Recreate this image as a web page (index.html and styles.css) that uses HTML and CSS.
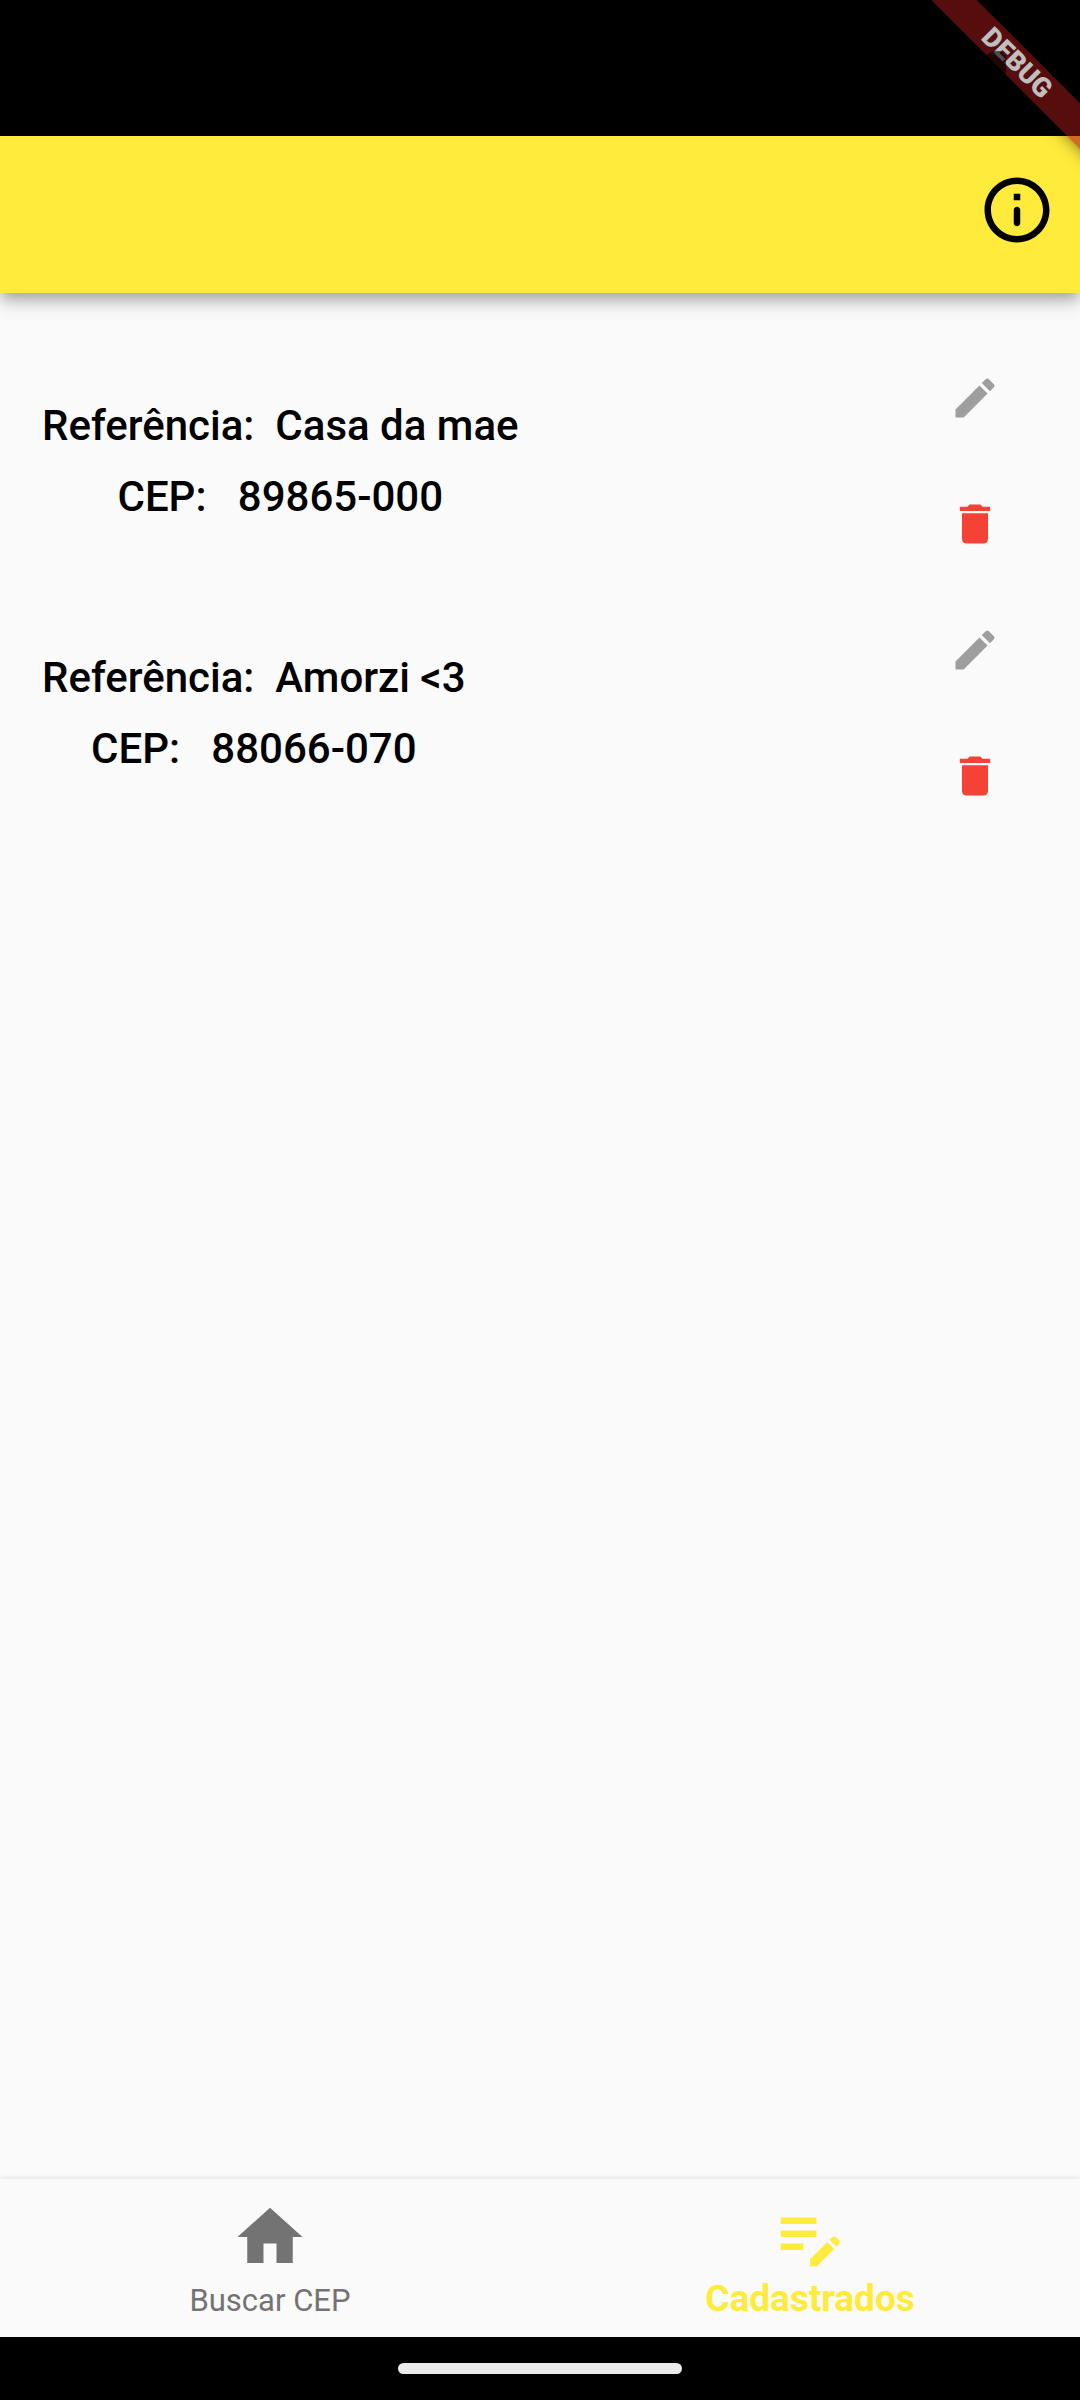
FILE: index.html
```html
<!DOCTYPE html>
<html lang="pt-BR">
<head>
<meta charset="utf-8">
<meta name="viewport" content="width=device-width, initial-scale=1">
<title>Cadastrados</title>
<link rel="stylesheet" href="styles.css">
</head>
<body>
<div class="app">
  <div class="status-bar"></div>
  <header class="app-bar">
    <button class="icon-button" type="button" aria-label="Informações">
      <svg class="icon icon-large" viewBox="0 0 24 24" aria-hidden="true"><path d="M11 7h2v2h-2V7zm1 10c.55 0 1-.45 1-1v-4c0-.55-.45-1-1-1s-1 .45-1 1v4c0 .55.45 1 1 1zm0-15C6.48 2 2 6.48 2 12s4.48 10 10 10 10-4.480 10-10S17.520 2 12 2zm0 18c-4.410 0-8-3.590-8-8s3.590-8 8-8 8 3.590 8 8-3.590 8-8 8z"/></svg>
    </button>
  </header>
  <main class="content">
    <ul class="address-list">
      <li class="address">
        <div class="address-text">
          <p class="line">Referência:  Casa da mae</p>
          <p class="line">CEP:   89865-000</p>
        </div>
        <div class="actions">
          <button class="icon-button edit" type="button" aria-label="Editar Casa da mae">
            <svg class="icon" viewBox="0 0 24 24" aria-hidden="true"><path d="M3 17.250V21h3.750L17.810 9.940l-3.750-3.750L3 17.250zM20.710 7.040c.39-.39.39-1.020 0-1.410l-2.340-2.340c-.39-.39-1.020-.39-1.410 0l-1.830 1.830 3.750 3.750 1.830-1.830z"/></svg>
          </button>
          <button class="icon-button delete" type="button" aria-label="Excluir Casa da mae">
            <svg class="icon" viewBox="0 0 24 24" aria-hidden="true"><path d="M6 19c0 1.100.9 2 2 2h8c1.100 0 2-.9 2-2V7H6v12zM19 4h-3.500l-1-1h-5l-1 1H5v2h14V4z"/></svg>
          </button>
        </div>
      </li>
      <li class="address">
        <div class="address-text">
          <p class="line">Referência:  Amorzi &lt;3</p>
          <p class="line">CEP:   88066-070</p>
        </div>
        <div class="actions">
          <button class="icon-button edit" type="button" aria-label="Editar Amorzi">
            <svg class="icon" viewBox="0 0 24 24" aria-hidden="true"><path d="M3 17.250V21h3.750L17.810 9.940l-3.750-3.750L3 17.250zM20.710 7.040c.39-.39.39-1.020 0-1.410l-2.340-2.340c-.39-.39-1.020-.39-1.410 0l-1.830 1.830 3.750 3.750 1.830-1.830z"/></svg>
          </button>
          <button class="icon-button delete" type="button" aria-label="Excluir Amorzi">
            <svg class="icon" viewBox="0 0 24 24" aria-hidden="true"><path d="M6 19c0 1.100.9 2 2 2h8c1.100 0 2-.9 2-2V7H6v12zM19 4h-3.500l-1-1h-5l-1 1H5v2h14V4z"/></svg>
          </button>
        </div>
      </li>
    </ul>
  </main>
  <nav class="bottom-nav">
    <a class="tab" href="#buscar">
      <svg class="icon icon-large" viewBox="0 0 24 24" aria-hidden="true"><path d="M10 20v-6h4v6h5v-8h3L12 3 2 12h3v8z"/></svg>
      <span class="tab-label">Buscar CEP</span>
    </a>
    <a class="tab tab-active" href="#cadastrados" aria-current="page">
      <svg class="icon icon-large" viewBox="0 0 24 24" aria-hidden="true"><path d="M3 10h11v2H3v-2zm0-2h11V6H3v2zm0 8h7v-2H3v2zm15.010-3.130.71-.71c.39-.39 1.020-.39 1.410 0l.71.71c.39.39.39 1.020 0 1.410l-.71.71-2.120-2.120zm-.71.71-5.300 5.300V21h2.120l5.300-5.300-2.120-2.120z"/></svg>
      <span class="tab-label">Cadastrados</span>
    </a>
  </nav>
  <footer class="gesture-bar"><div class="gesture-handle"></div></footer>
  <div class="ribbon-corner">
    <div class="ribbon">DEBUG</div>
    <svg class="battery" viewBox="0 0 20 25" aria-hidden="true"><path d="M7 0h8l5 6v19L0 4z"/></svg>
  </div>
  <div class="status-scrim"></div>
</div>
</body>
</html>
```

FILE: styles.css
```css
* {
  box-sizing: border-box;
}

body {
  margin: 0;
  background: #fafafa;
  color: #000;
  font-family: Roboto, "Liberation Sans", sans-serif;
}

.app {
  position: relative;
  display: flex;
  flex-direction: column;
  min-height: 100vh;
  overflow: hidden;
}

.status-bar {
  height: 136px;
  background: #000;
}

.app-bar {
  display: flex;
  align-items: center;
  justify-content: flex-end;
  height: 157px;
  padding-bottom: 10px;
  background: #ffeb3b;
  box-shadow:
    0 5px 11px -3px rgba(0, 0, 0, 0.2),
    0 11px 13px rgba(0, 0, 0, 0.14),
    0 3px 26px rgba(0, 0, 0, 0.12);
}

.icon-button {
  display: flex;
  align-items: center;
  justify-content: center;
  width: 126px;
  height: 126px;
  padding: 0;
  border: 0;
  background: none;
  color: inherit;
  cursor: pointer;
}

.icon {
  display: block;
  width: 52px;
  height: 52px;
  fill: currentColor;
}

.icon-large {
  width: 78px;
  height: 78px;
}

.content {
  flex: 1;
  padding: 42px;
}

.address-list {
  margin: 0;
  padding: 0;
  list-style: none;
}

.address {
  display: flex;
  align-items: center;
  justify-content: space-between;
}

.address-text {
  text-align: center;
}

.line {
  margin: 0;
  font-size: 42px;
  font-weight: 500;
  line-height: 71px;
  white-space: pre;
}

.edit {
  color: #9e9e9e;
}

.delete {
  color: #f44336;
}

.bottom-nav {
  display: flex;
  height: 158px;
  background: #fafafa;
  box-shadow: 0 -1px 4px rgba(0, 0, 0, 0.1);
}

.tab {
  display: flex;
  flex: 1;
  flex-direction: column;
  align-items: center;
  padding-top: 19px;
  color: #737373;
  font-size: 31px;
  line-height: 50px;
  text-decoration: none;
}

.tab-active {
  color: #ffeb3b;
  font-size: 37px;
  font-weight: 700;
  line-height: 46px;
}

.gesture-bar {
  display: flex;
  align-items: center;
  justify-content: center;
  height: 63px;
  background: #000;
}

.gesture-handle {
  width: 284px;
  height: 11px;
  border-radius: 6px;
  background: #ebebeb;
}

.ribbon-corner {
  position: absolute;
  top: 0;
  right: 0;
  width: 210px;
  height: 210px;
  overflow: hidden;
  pointer-events: none;
}

.ribbon {
  position: absolute;
  top: 47px;
  right: -87px;
  width: 300px;
  height: 32px;
  background: rgba(183, 28, 28, 0.63);
  box-shadow: 0 0 16px rgba(0, 0, 0, 0.5);
  color: #fff;
  font-size: 27px;
  font-weight: 900;
  line-height: 32px;
  text-align: center;
  transform: rotate(45deg);
}

.battery {
  position: absolute;
  top: 51px;
  right: 74px;
  width: 20px;
  height: 25px;
  fill: rgba(0, 0, 0, 0.6);
}

.status-scrim {
  position: absolute;
  top: 0;
  left: 0;
  right: 0;
  height: 136px;
  background: rgba(0, 0, 0, 0.25);
  pointer-events: none;
}
```
